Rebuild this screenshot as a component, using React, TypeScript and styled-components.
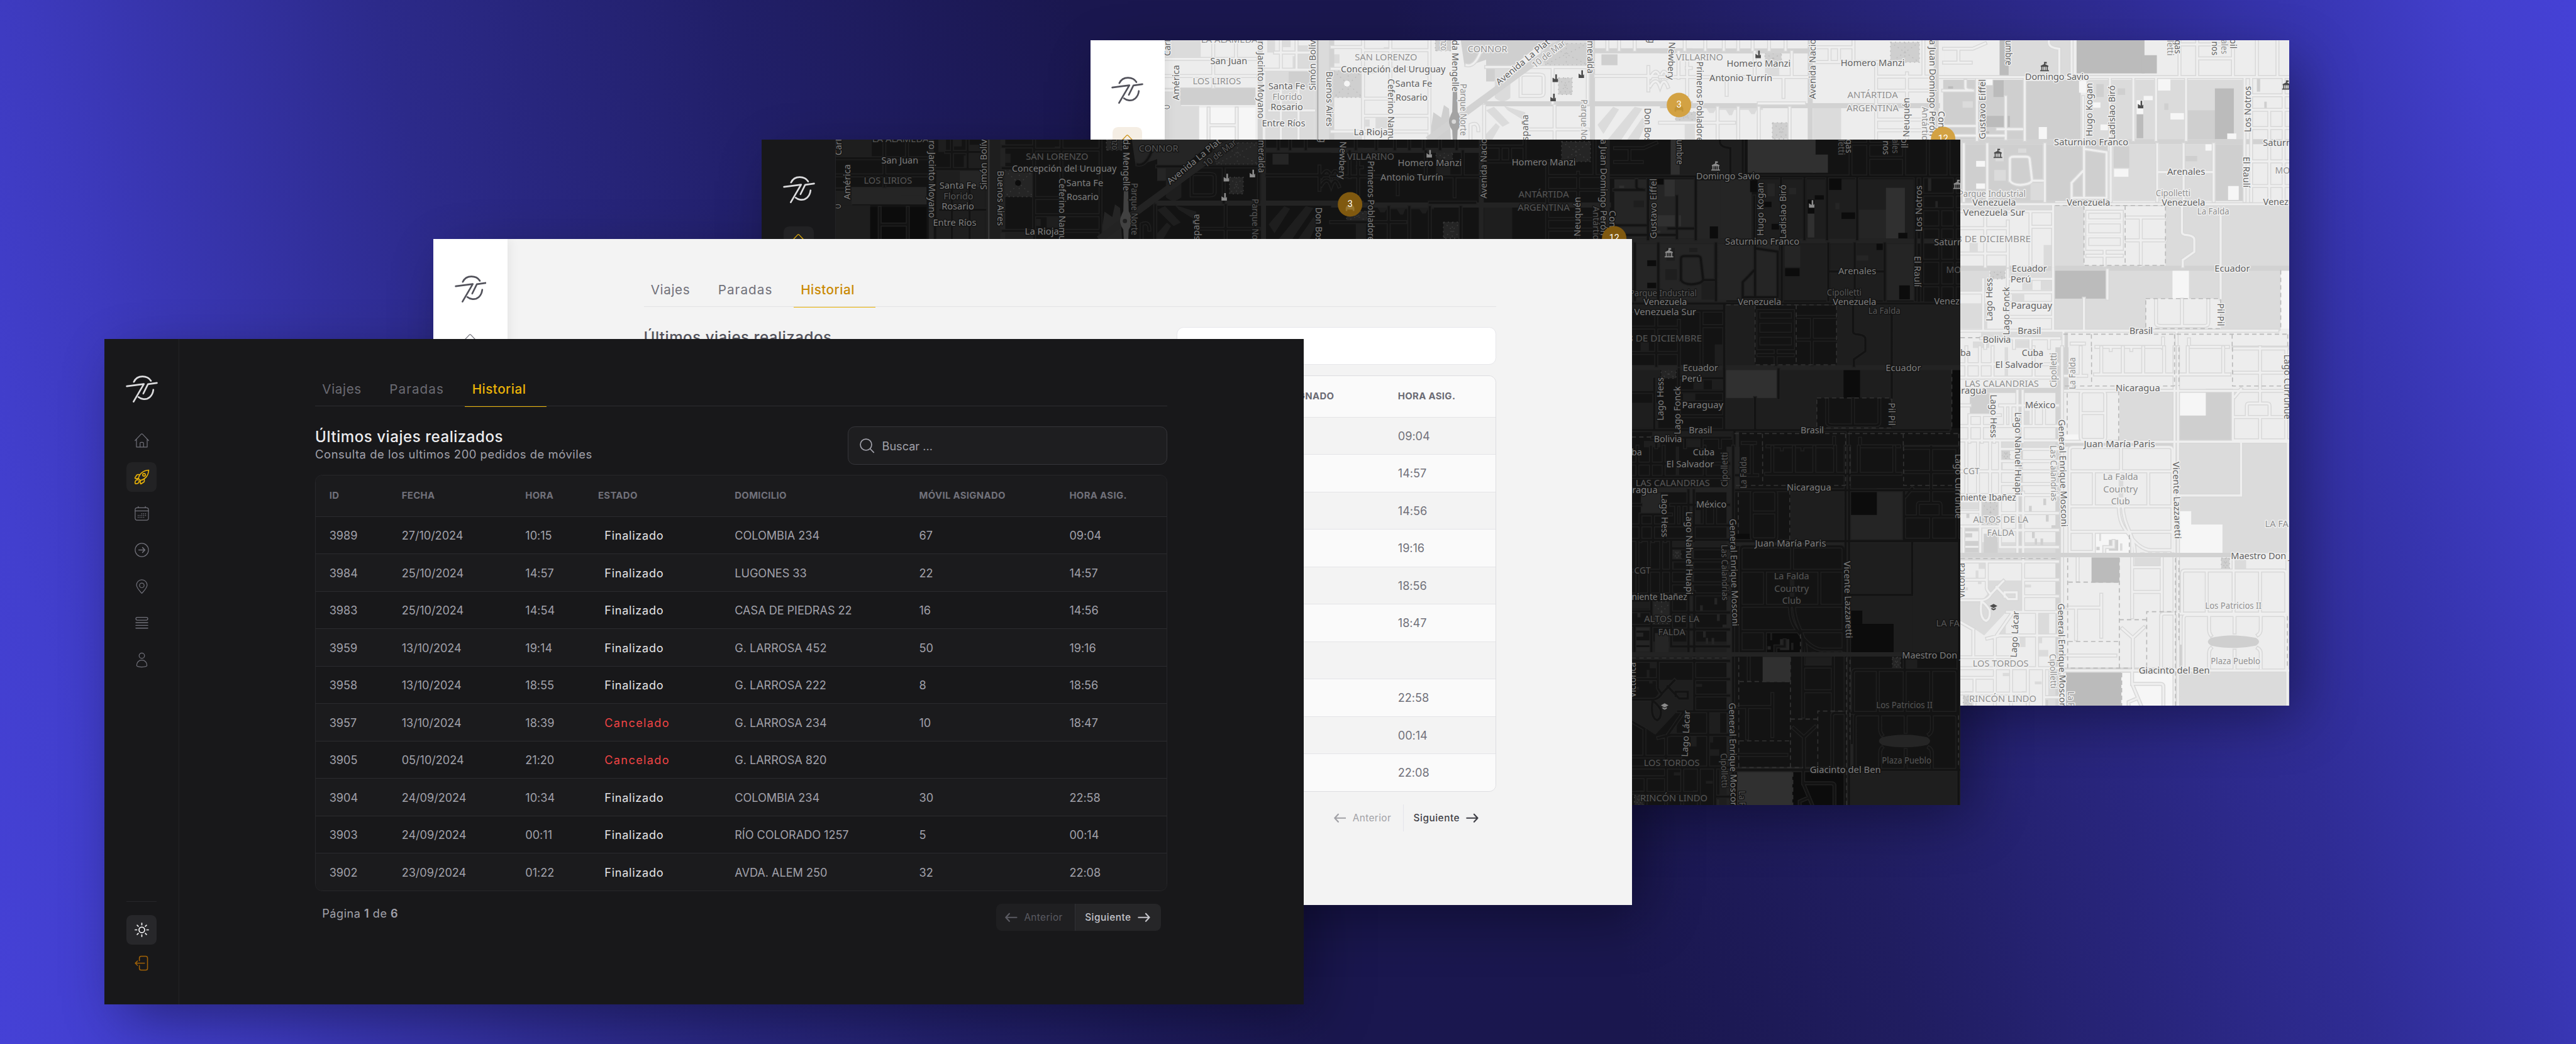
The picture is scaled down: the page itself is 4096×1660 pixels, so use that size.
import React from 'react';
import styled, { createGlobalStyle, ThemeProvider, css } from 'styled-components';

/* 1rem is ten design units; the board is 474.9rem wide. */
const GlobalStyle = createGlobalStyle`
  html { font-size: 8.625px; }
  body { margin: 0; background: #1a174d; overflow: hidden; }
  *, *::before, *::after { box-sizing: border-box; }
`;

const dark = {
  name: 'dark',
  page: '#18181a', side: '#18181a', sideBorder: '#232326', sideShadow: 'none',
  logo: '#dcdcde', icon: '#71717a', activeIcon: '#eab308', activeBox: '#222224',
  sunBox: '#27272a', sun: '#f4f4f5', exit: '#a16207', rule: '#27272a',
  tab: '#6b6b73', tabActive: '#eab308', tabLine: '#2e2e31', tabBar: '#eab308',
  title: '#ececee', sub: '#a1a1aa',
  search: '#1e1e20', searchBorder: '#36363a', searchText: '#a1a1aa',
  border: '#27272a', line: '#2b2b2e', head: '#1b1b1d', headText: '#71717a', even: '#1b1b1d', odd: '#18181a',
  cell: '#a1a1aa', status: '#e4e4e7', cancel: '#ef4444',
  prev: '#1f1f21', next: '#262628', prevText: '#5b5b62', nextText: '#c4c4ca', split: '#313135',
  map: {
    base: '#131313', a: '#1e1e1e', b: '#252525', c: '#303030', w: '#0c0c0c', dots: '#3a3a3a',
    casing: '#202020', inner: '#131313', major: '#232323', dash: '#333333', strong: '#414141',
    text: '#7d7d7d', minor: '#565656', halo: '#151515', poi: '#8b8b8b', pin: '#80590f', pinCar: '#a88a45',
  },
};

const light: typeof dark = {
  name: 'light',
  page: '#f3f3f3', side: '#ffffff', sideBorder: '#ffffff', sideShadow: '0.2rem 0 2rem rgba(0,0,0,.07)',
  logo: '#52525b', icon: '#71717a', activeIcon: '#ca8a04', activeBox: '#f5eee4',
  sunBox: '#f4f4f5', sun: '#52525b', exit: '#ca8a04', rule: '#e4e4e7',
  tab: '#71717a', tabActive: '#ca8a04', tabLine: '#e2e2e4', tabBar: '#eab308',
  title: '#52525b', sub: '#71717a',
  search: '#ffffff', searchBorder: '#e6e6ea', searchText: '#71717a',
  border: '#dddde0', line: '#e4e4e7', head: '#fafafa', headText: '#6b6b74', even: '#fafafa', odd: '#f3f3f3',
  cell: '#71717a', status: '#3f3f46', cancel: '#ef4444',
  prev: 'transparent', next: 'transparent', prevText: '#a1a1a6', nextText: '#3f3f46', split: '#e4e4ea',
  map: {
    base: '#ededed', a: '#dbdbdb', b: '#cfcfcf', c: '#bbbbbb', w: '#f6f6f6', dots: '#bdbdbd',
    casing: '#d8d8d8', inner: '#efefef', major: '#d2d2d2', dash: '#b9b9b9', strong: '#a3a3a3',
    text: '#626262', minor: '#919191', halo: '#f0f0f0', poi: '#4c4c4c', pin: '#d3a243', pinCar: '#b98a2c',
  },
};

type Theme = typeof dark;

/* ---------- Board and windows ---------- */

const Board = styled.main`
  position: relative;
  width: 474.9rem;
  height: 192.5rem;
  overflow: hidden;
  font-family: Inter, "Liberation Sans", sans-serif;
  background: linear-gradient(76deg, #4541d6 0%, #423fce 5%, #3d3abe 10%, #2c2a8a 22.5%, #211f68 35%, #1a174f 47%, #1a174e 58%, #201d60 67.5%, #2f2c94 83.7%, #3735b0 90%, #423fcc 96%, #4541d6 100%);
`;

const Window = styled.section<{ $step: number }>`
  position: absolute;
  isolation: isolate;
  left: ${p => 19.3 + p.$step * 60.57}rem;
  top: ${p => 62.45 - p.$step * 18.35}rem;
  width: 221rem;
  height: 122.7rem;
  display: flex;
  overflow: hidden;
  background: ${p => (p.theme as Theme).page};
`;

const WindowShadow = styled.div<{ $step: number }>`
  position: absolute;
  left: ${p => 19.3 + p.$step * 60.57}rem;
  top: ${p => 62.45 - p.$step * 18.35}rem;
  width: 221rem;
  height: 122.7rem;
  box-shadow: 2.5rem 3rem 10rem -1rem rgba(0, 0, 10, 0.42);
`;

/* ---------- Sidebar ---------- */

const Side = styled.aside`
  position: relative;
  z-index: 1;
  flex: none;
  width: 13.7rem;
  padding: 6.6rem 0 4.8rem;
  display: flex;
  flex-direction: column;
  align-items: center;
  background: ${p => (p.theme as Theme).side};
  border-right: 0.2rem solid ${p => (p.theme as Theme).sideBorder};
  box-shadow: ${p => (p.theme as Theme).sideShadow};
`;

const LogoMark = styled.svg`
  width: 6rem;
  height: 5.2rem;
  flex: none;
  fill: none;
  stroke: ${p => (p.theme as Theme).logo};
  stroke-width: 3.1;
  stroke-linecap: round;
  stroke-linejoin: round;
`;

const Nav = styled.nav`
  margin-top: 4.2rem;
  display: flex;
  flex-direction: column;
  gap: 1.24rem;
`;

const NavItem = styled.a<{ $active?: boolean; $tone?: 'sun' | 'exit' }>`
  width: 5.5rem;
  height: 5.5rem;
  border-radius: 1rem;
  display: grid;
  place-items: center;
  color: ${p => {
    const t = p.theme as Theme;
    if (p.$tone === 'sun') return t.sun;
    if (p.$tone === 'exit') return t.exit;
    return p.$active ? t.activeIcon : t.icon;
  }};
  ${p => p.$active && css`background: ${(p.theme as Theme).activeBox};`}
  ${p => p.$tone === 'sun' && css`background: ${(p.theme as Theme).sunBox};`}
`;

const Glyph = styled.svg<{ $weight?: number }>`
  width: 2.9rem;
  height: 2.9rem;
  overflow: visible;
  fill: none;
  stroke: currentColor;
  stroke-width: ${p => p.$weight ?? 1.4};
  stroke-linecap: round;
  stroke-linejoin: round;
`;

const SideFoot = styled.div`
  margin-top: auto;
  width: 5.5rem;
  padding-top: 2.4rem;
  border-top: 0.2rem solid ${p => (p.theme as Theme).rule};
  display: flex;
  flex-direction: column;
  gap: 0.65rem;
`;

const HomeIcon = () => (
  <Glyph viewBox="0 0 29 29">
    <path d="M2 14.5 13.2 2.7a1.8 1.8 0 0 1 2.6 0L27 14.5M4.6 12v14.5h19.8V12M11.3 26.5v-7a1.6 1.6 0 0 1 1.6-1.6h3.2a1.6 1.6 0 0 1 1.6 1.6v7" />
  </Glyph>
);
const RocketIcon = () => (
  <Glyph viewBox="0 0 29 29" $weight={1.9}>
    <path d="M8.2 17.2C9.6 9.5 16 2.4 27.2 1.8 26.6 13 19.5 19.4 11.8 20.8Z" />
    <circle cx="18.6" cy="10.4" r="2.5" />
    <path d="M11 10.2 7.6 9.8c-1 0-1.8.3-2.4 1L2 15.8c-.3.6 0 1 .6 1.1l5.4.6M18.8 18l.4 3.4c0 1-.3 1.8-1 2.4L13.2 27c-.6.3-1 0-1.100-.6l-.6-5.4" />
    <path d="M7.3 19.8c-2.6-1-5 1-5.300 5.200-.1 1.200.8 2 2 1.900 4.200-.3 6.200-2.700 5.200-5.300" />
  </Glyph>
);
const CalendarIcon = () => (
  <Glyph viewBox="0 0 29 29">
    <rect x="2.2" y="4" width="24.6" height="22.8" rx="3.6" />
    <path d="M8 1.5V4M21 1.5V4M2.2 9.8h24.6" />
    <g strokeWidth="1.9">
      <path d="M14.5 15v.1M18 15v.1M21.5 15v.1M7.8 18.2v.1M11.2 18.2v.1M14.5 18.2v.1M18 18.2v.1M21.5 18.2v.1M7.8 21.5v.1M11.2 21.5v.1M14.5 21.5v.1M18 21.5v.1" />
    </g>
  </Glyph>
);
const ArrowCircleIcon = () => (
  <Glyph viewBox="0 0 29 29">
    <circle cx="14.5" cy="14.5" r="12.3" />
    <path d="M8.8 14.5h11M15.8 10l4.4 4.5-4.4 4.5" strokeWidth="1.7" />
  </Glyph>
);
const PinIcon = () => (
  <Glyph viewBox="0 0 29 29">
    <path d="M24.3 12c0 5-4.8 9.6-9.8 15.2C9.5 21.6 4.7 17 4.700 12a9.800 9.800 0 0 1 19.600 0Z" />
    <circle cx="14.5" cy="12.5" r="4.3" />
  </Glyph>
);
const ListIcon = () => (
  <Glyph viewBox="0 0 29 29">
    <rect x="3.5" y="4.2" width="22" height="5.2" rx="2.6" />
    <path d="M3.5 14h22M3.5 19h22M3.5 24h22" strokeWidth="1.7" />
  </Glyph>
);
const UserIcon = () => (
  <Glyph viewBox="0 0 29 29">
    <circle cx="14.5" cy="6.5" r="5" />
    <path d="M5 24.500c0-6 4-9.800 9.500-9.800s9.500 3.800 9.500 9.800c0 1.800-4 2.800-9.500 2.800S5 26.300 5 24.500Z" />
  </Glyph>
);
const SunIcon = () => (
  <Glyph viewBox="0 0 29 29" $weight={2}>
    <circle cx="14.5" cy="14.5" r="5.2" />
    <path d="M14.5 2.3v3M14.5 23.7v3M2.3 14.5h3M23.7 14.5h3M5.9 5.9 8 8M21 21l2.100 2.100M5.900 23.100 8 21M21 8l2.100-2.100" />
  </Glyph>
);
const ExitIcon = () => (
  <Glyph viewBox="0 0 29 29" $weight={1.8}>
    <path d="M10 10V5a3.200 3.200 0 0 1 3.200-3.200h8.600A3.200 3.200 0 0 1 25 5v19a3.200 3.200 0 0 1-3.200 3.200h-8.600A3.200 3.200 0 0 1 10 24v-5M19.500 14.500H3M6.500 10.500l-4 4 4 4" />
  </Glyph>
);

const NAV = [HomeIcon, RocketIcon, CalendarIcon, ArrowCircleIcon, PinIcon, ListIcon, UserIcon];

function Sidebar({ active }: { active: number }) {
  return (
    <Side>
      <LogoMark viewBox="38 66 60 52">
        <path d="M54 79C57 72.500 63 69 70 69s12.500 3 15.500 8" />
        <path d="M41 87 72.500 83 53.500 115.500" />
        <path d="M96.500 81 80 83.200 71.500 100.500" />
        <path d="M90 93.500C88.500 106 80 111.500 72 110.800c-3.500-.3-7-1.600-9.500-3.800" />
      </LogoMark>
      <Nav>
        {NAV.map((Icon, i) => (
          <NavItem key={i} $active={i === active}><Icon /></NavItem>
        ))}
      </Nav>
      <SideFoot>
        <NavItem $tone="sun"><SunIcon /></NavItem>
        <NavItem $tone="exit"><ExitIcon /></NavItem>
      </SideFoot>
    </Side>
  );
}

/* ---------- History page ---------- */

const Page = styled.div`
  width: 157.1rem;
  margin-left: 25.1rem;
  display: flex;
  flex-direction: column;
`;

const Tabs = styled.div`
  height: 12.5rem;
  padding-left: 1.3rem;
  display: flex;
  align-items: flex-end;
  border-bottom: 0.2rem solid ${p => (p.theme as Theme).tabLine};
`;

const Tab = styled.a<{ $active?: boolean; $width: number; $track: number }>`
  width: ${p => p.$width}rem;
  height: 5.1rem;
  margin-bottom: -0.2rem;
  padding-left: ${p => (p.$active ? 1.35 : 0)}rem;
  font-size: 2.4rem;
  line-height: 3.8rem;
  letter-spacing: ${p => p.$track}em;
  white-space: nowrap;
  font-weight: ${p => (p.$active ? 500 : 400)};
  color: ${p => (p.$active ? (p.theme as Theme).tabActive : (p.theme as Theme).tab)};
  border-bottom: 0.2rem solid ${p => (p.$active ? (p.theme as Theme).tabBar : 'transparent')};
`;

const Heading = styled.header`
  height: 12.6rem;
  padding-top: 3.7rem;
  display: flex;
  justify-content: space-between;
`;

const Title = styled.h1`
  margin: 0.2rem 0 0;
  font-size: 2.8rem;
  line-height: 3.4rem;
  font-weight: 500;
  letter-spacing: 0.021em;
  color: ${p => (p.theme as Theme).title};
`;

const Subtitle = styled.p`
  margin: 0.1rem 0 0;
  font-size: 2.14rem;
  line-height: 2.9rem;
  letter-spacing: 0.028em;
  color: ${p => (p.theme as Theme).sub};
`;

const Search = styled.div`
  width: 58.9rem;
  height: 7rem;
  padding: 0 2rem;
  display: flex;
  align-items: center;
  gap: 1.3rem;
  font-size: 2.1rem;
  color: ${p => (p.theme as Theme).searchText};
  background: ${p => (p.theme as Theme).search};
  border: 0.2rem solid ${p => (p.theme as Theme).searchBorder};
  border-radius: 1.3rem;
`;

const Grid = styled.div`
  border: 0.2rem solid ${p => (p.theme as Theme).border};
  border-radius: 1.3rem;
  overflow: hidden;
`;

const columns = css`
  display: grid;
  grid-template-columns: 13.34rem 22.8rem 13.4rem 25.2rem 34rem 27.7rem 1fr;
  align-items: center;
  padding-left: 2.5rem;
`;

const HeadRow = styled.div`
  ${columns}
  height: 7.5rem;
  padding-bottom: 0.1rem;
  font-size: 1.73rem;
  font-weight: 700;
  letter-spacing: 0.022em;
  color: ${p => (p.theme as Theme).headText};
  background: ${p => (p.theme as Theme).head};
`;

const Row = styled.div`
  ${columns}
  height: 6.9rem;
  font-size: 2.1rem;
  letter-spacing: -0.002em;
  color: ${p => (p.theme as Theme).cell};
  background: ${p => (p.theme as Theme).odd};
  border-top: 0.2rem solid ${p => (p.theme as Theme).line};
  &:nth-child(odd) { background: ${p => (p.theme as Theme).even}; }
`;

const Status = styled.span<{ $cancelled: boolean }>`
  padding-left: 1.2rem;
  letter-spacing: 0.04em;
  color: ${p => (p.$cancelled ? (p.theme as Theme).cancel : (p.theme as Theme).status)};
  ${p => p.$cancelled && css`letter-spacing: 0.075em;`}
`;

const Footer = styled.footer`
  padding: 2.4rem 1.2rem 0 1.3rem;
  display: flex;
  justify-content: space-between;
  color: ${p => (p.theme as Theme).cell};
`;

const PageCount = styled.span`
  padding-top: 0.3rem;
  font-size: 2.1rem;
  line-height: 2.8rem;
  letter-spacing: 0.028em;
  b { font-weight: 600; }
`;

const Pager = styled.div`
  width: 30.4rem;
  height: 4.95rem;
  display: flex;
  border-radius: 1rem;
  overflow: hidden;
`;

const PagerButton = styled.a<{ $next?: boolean }>`
  flex: none;
  width: ${p => (p.$next ? 15.9 : 14.5)}rem;
  display: flex;
  align-items: center;
  gap: 1.2rem;
  padding-left: 1.7rem;
  font-size: 1.78rem;
  letter-spacing: 0.025em;
  color: ${p => (p.$next ? (p.theme as Theme).nextText : (p.theme as Theme).prevText)};
  background: ${p => (p.$next ? (p.theme as Theme).next : (p.theme as Theme).prev)};
  ${p => p.$next && css`
    padding-left: 1.8rem;
    font-weight: 500;
    letter-spacing: 0.035em;
    border-left: 0.2rem solid ${(p.theme as Theme).split};
  `}
`;

const Arrow = styled.svg`
  width: 2.3rem;
  height: 1.8rem;
  flex: none;
  fill: none;
  stroke: currentColor;
  stroke-width: 2.5;
  stroke-linecap: round;
  stroke-linejoin: round;
`;

const HEAD = ['ID', 'FECHA', 'HORA', 'ESTADO', 'DOMICILIO', 'MÓVIL ASIGNADO', 'HORA ASIG.'];
const TRIPS = [
  ['3989', '27/10/2024', '10:15', 'Finalizado', 'COLOMBIA 234', '67', '09:04'],
  ['3984', '25/10/2024', '14:57', 'Finalizado', 'LUGONES 33', '22', '14:57'],
  ['3983', '25/10/2024', '14:54', 'Finalizado', 'CASA DE PIEDRAS 22', '16', '14:56'],
  ['3959', '13/10/2024', '19:14', 'Finalizado', 'G. LARROSA 452', '50', '19:16'],
  ['3958', '13/10/2024', '18:55', 'Finalizado', 'G. LARROSA 222', '8', '18:56'],
  ['3957', '13/10/2024', '18:39', 'Cancelado', 'G. LARROSA 234', '10', '18:47'],
  ['3905', '05/10/2024', '21:20', 'Cancelado', 'G. LARROSA 820', '', ''],
  ['3904', '24/09/2024', '10:34', 'Finalizado', 'COLOMBIA 234', '30', '22:58'],
  ['3903', '24/09/2024', '00:11', 'Finalizado', 'RÍO COLORADO 1257', '5', '00:14'],
  ['3902', '23/09/2024', '01:22', 'Finalizado', 'AVDA. ALEM 250', '32', '22:08'],
];

function History({ placeholder }: { placeholder: boolean }) {
  return (
    <Page>
      <Tabs>
        <Tab $width={12.4} $track={0.03}>Viajes</Tab>
        <Tab $width={13.9} $track={0.05}>Paradas</Tab>
        <Tab $width={15.1} $track={0.022} $active>Historial</Tab>
      </Tabs>
      <Heading>
        <div>
          <Title>Últimos viajes realizados</Title>
          <Subtitle>Consulta de los ultimos 200 pedidos de móviles</Subtitle>
        </div>
        <Search>
          {placeholder && (
            <>
              <Glyph viewBox="0 0 29 29" $weight={2}>
                <circle cx="12.8" cy="12.8" r="10.4" />
                <path d="m20.3 20.3 6.7 6.7" />
              </Glyph>
              <span>Buscar ...</span>
            </>
          )}
        </Search>
      </Heading>
      <Grid>
        <HeadRow>{HEAD.map(h => <span key={h}>{h}</span>)}</HeadRow>
        {TRIPS.map(trip => (
          <Row key={trip[0]}>
            {trip.map((value, i) =>
              i === 3
                ? <Status key={i} $cancelled={value === 'Cancelado'}>{value}</Status>
                : <span key={i}>{value}</span>,
            )}
          </Row>
        ))}
      </Grid>
      <Footer>
        <PageCount>Página <b>1</b> de <b>6</b></PageCount>
        <Pager>
          <PagerButton>
            <Arrow viewBox="0 0 23 18"><path d="M21.5 9h-20M8 2 1.5 9 8 16" /></Arrow>
            Anterior
          </PagerButton>
          <PagerButton $next>
            Siguiente
            <Arrow viewBox="0 0 23 18"><path d="M1.5 9h20M15 2l6.5 7-6.500 7" /></Arrow>
          </PagerButton>
        </Pager>
      </Footer>
    </Page>
  );
}

/* ---------- Map ---------- */

const MapCanvas = styled.svg`
  flex: 1;
  min-width: 0;
  height: 122.7rem;
  display: block;
  background: ${p => (p.theme as Theme).map.base};
  .n { vector-effect: non-scaling-stroke; fill: none; }
  .casing { stroke: ${p => (p.theme as Theme).map.casing}; stroke-width: 6.2; stroke-linecap: square; }
  .inner { stroke: ${p => (p.theme as Theme).map.inner}; stroke-width: 3.2; stroke-linecap: square; }
  .major { stroke: ${p => (p.theme as Theme).map.major}; stroke-width: 8; }
  .dash { stroke: ${p => (p.theme as Theme).map.dash}; stroke-width: 1.6; stroke-dasharray: 7 5; }
  .dots { stroke: ${p => (p.theme as Theme).map.dots}; stroke-width: 1.5; stroke-dasharray: 2 5; }
  text {
    font-family: "Noto Sans", sans-serif;
    text-anchor: middle;
    paint-order: stroke;
    stroke-width: 3.5;
    stroke-linejoin: round;
    stroke: ${p => (p.theme as Theme).map.halo};
  }
`;

/* [x1, y1, x2, y2, shade] */
type Area = [number, number, number, number, 'a' | 'b' | 'c' | 'w' | 'base'];
interface Tile {
  transform: string;
  areas: Area[];
  shapes?: [string, 'a' | 'b' | 'c'][];
  dotted?: [number, number, number, number][];
  majors: string;
  streets: string;
  dashes?: string;
}

const north: Tile = {
  transform: 'translate(-20 -14) scale(.7207 .33333)',
  areas: [
    [218, 42, 310, 135, 'a'], [218, 305, 260, 594, 'a'], [258, 304, 450, 400, 'b'], [384, 350, 450, 400, 'b'],
    [218, 405, 306, 594, 'a'], [306, 415, 450, 594, 'w'], [475, 206, 600, 594, 'a'], [535, 208, 590, 305, 'b'],
    [480, 42, 500, 110, 'a'], [512, 42, 540, 80, 'a'], [545, 130, 560, 195, 'a'], [558, 70, 600, 200, 'a'],
    [600, 42, 645, 594, 'a'], [648, 545, 725, 594, 'a'], [730, 200, 760, 225, 'a'], [640, 120, 665, 170, 'a'], [778, 80, 795, 104, 'a'],
    [730, 480, 742, 520, 'a'], [757, 470, 795, 530, 'a'], [1335, 120, 1376, 180, 'b'], [1180, 42, 1310, 180, 'a'],
  ],
  shapes: [
    ['M975 42H1190L1060 270H1040V150L985 190Z', 'b'],
    ['M1062 200H1102V360Q1082 400 1062 360Z', 'a'],
    ['M1040 430 1060 410 1100 500 1082 520ZM1085 405 1140 440V490L1095 430ZM1040 560 1065 500 1075 520 1055 594H1038Z', 'a'],
    ['M1325 510 1365 410 1380 425 1340 560ZM1350 594 1420 410 1440 420 1385 594ZM1400 594 1440 470 1450 500 1430 594Z', 'a'],
    ['M895 594 905 440 925 470 932 400 945 420 950 594Z', 'b'],
  ],
  dotted: [[650, 212, 724, 358], [910, 42, 950, 100], [1225, 250, 1260, 342], [1190, 60, 1300, 178]],
  majors: 'M462 42V594M1312 42V594M1035 393H1568M1315 100H1568M645 42V594',
  streets:
    'M218 145H450M218 240H450M218 320H250M342 145V300M342 42V135M400 42V140M475 205H600M515 42V205M555 42V205M500 110H600' +
    'M725 42V594M795 42V594M895 42V594M725 97H890M645 200H900M725 365H890M725 460H890M645 547H890M645 80H725' +
    'M330 420V594M402 420V594M330 512H402M515 320V594M560 305V594M485 430H600' +
    'M1040 190H1300V390M1210 190V390M1128 350V245Q1128 232 1140 232H1175Q1187 232 1187 245V335Q1187 350 1175 350H1128' +
    'M1035 405V594M1215 405V594M1140 535H1300M1290 400V594M990 180Q1010 190 1025 110M1320 240H1480M1455 190V320M1380 42V95M1420 42V95M1350 42V95' +
    'M1000 594V510Q1020 490 1020 540M1460 250Q1475 180 1485 250Q1495 180 1505 250M1460 295Q1475 240 1485 300Q1495 240 1505 300',
};

const northEast: Tile = {
  transform: 'translate(1050 -14) scale(.7589 .3954)',
  areas: [
    [372, 348, 440, 500, 'a'], [255, 150, 290, 200, 'a'], [60, 400, 85, 500, 'a'],
    [690, 42, 825, 200, 'base'], [847, 35, 1000, 200, 'a'], [825, 35, 847, 200, 'c'], [1012, 35, 1177, 190, 'c'], [1170, 105, 1207, 190, 'c'],
    [688, 220, 885, 497, 'b'], [888, 225, 945, 500, 'b'], [945, 220, 1022, 497, 'b'], [1035, 220, 1090, 497, 'a'], [1098, 220, 1145, 497, 'a'],
    [1155, 220, 1200, 497, 'a'], [1208, 220, 1275, 497, 'a'], [1280, 220, 1415, 497, 'a'], [1282, 362, 1350, 497, 'b'], [1348, 260, 1394, 497, 'c'],
    [790, 388, 850, 440, 'c'], [810, 222, 835, 300, 'c'], [1158, 380, 1174, 492, 'c'],
    [790, 215, 808, 245, 'w'], [1018, 225, 1036, 280, 'w'], [1208, 215, 1240, 270, 'w'], [1240, 375, 1273, 405, 'w'], [1175, 295, 1197, 315, 'w'],
    [1158, 315, 1174, 380, 'w'], [920, 440, 940, 497, 'w'], [1052, 325, 1070, 350, 'w'], [1070, 428, 1090, 455, 'w'], [1378, 470, 1400, 497, 'w'],
    [730, 520, 792, 785, 'b'], [798, 520, 930, 785, 'b'], [900, 700, 930, 785, 'a'], [938, 520, 1088, 785, 'b'], [1100, 520, 1205, 785, 'a'], [1102, 530, 1140, 630, 'b'],
    [1213, 520, 1270, 785, 'a'], [1275, 520, 1342, 785, 'a'], [1350, 520, 1420, 785, 'b'], [1275, 575, 1305, 600, 'b'],
    [768, 598, 790, 625, 'w'], [768, 703, 790, 728, 'w'], [1103, 635, 1138, 672, 'w'], [1325, 518, 1342, 550, 'w'], [1380, 715, 1406, 780, 'w'],
    [730, 785, 960, 828, 'a'], [958, 805, 1030, 1090, 'a'], [1228, 805, 1530, 1090, 'a'], [932, 990, 955, 1085, 'a'],
    [730, 1105, 800, 1212, 'a'], [958, 1107, 1365, 1385, 'a'], [958, 1107, 1087, 1240, 'c'], [1245, 1105, 1285, 1240, 'w'],
    [1180, 1240, 1362, 1380, 'base'], [1365, 1105, 1508, 1390, 'a'], [1508, 1105, 1530, 1380, 'w'], [730, 1262, 795, 1380, 'a'],
    [850, 1105, 955, 1140, 'a'], [880, 1155, 905, 1200, 'a'], [925, 1155, 952, 1200, 'a'], [855, 1220, 885, 1255, 'a'], [780, 1395, 975, 1425, 'a'],
    [760, 1440, 800, 1470, 'a'], [865, 1435, 905, 1470, 'a'], [752, 980, 772, 1020, 'a'], [1450, 215, 1458, 275, 'b'], [1468, 322, 1474, 355, 'b'],
    [780, 460, 800, 490, 'c'], [700, 250, 712, 270, 'c'], [735, 320, 760, 350, 'a'], [1225, 330, 1235, 360, 'b'], [1112, 260, 1130, 290, 'b'], [1060, 240, 1078, 300, 'b'],
    [815, 540, 835, 600, 'a'], [812, 640, 840, 690, 'a'], [870, 540, 890, 560, 'a'],
  ],
  shapes: [['M110 345H250V360H235L230 380H222L215 360H180L175 385H168L160 360H135L130 375H120Z', 'a']],
  dotted: [[560, 45, 630, 138], [273, 420, 316, 495], [255, 95, 295, 150], [38, 370, 88, 415], [802, 1105, 838, 1148]],
  majors:
    'M365 35V500M671 35V500M0 340H680M0 85H360M680 508H1530M730 1098H1530M730 793H960M985 1390V1470M680 508V780',
  streets:
    'M0 207H360M0 420H180M45 90V210M97 130V500M140 350V500M190 350V500M240 350V500M315 350V500M110 35V80M155 35V80M190 35V80M225 35V80M265 35V80M305 35V80M60 35V80' +
    'M66 130V290M162 210V290M300 210V300M240 330H350M65 165H75M230 90V205M320 90V205M380 68H470M412 68V135M435 68V135M470 40V135M380 137H560M525 140V500M600 190V500' +
    'M525 205H665M525 270H665M525 405H665M525 455H665M690 75H760L790 50M690 140H755M640 35V200M725 75V140' +
    'M680 207H1530M688 270H760M770 220V500M840 300V495M690 435H765M886 210V500M1028 300V500M1093 210V500M1150 210V500M1205 210V500M1278 210V500M1420 210V785M690 480H840M742 225V255Q742 268 755 268' +
    'M820 450H880M945 35Q940 70 970 75V200M1000 35V200M1262 35V200M1305 35V200M1392 35V200M1450 35V200M1500 35V200M1262 55H1390M1305 120H1390' +
    'M1436 210V785M1480 360V500M1515 210V780M1440 292H1530M1440 360H1530M1440 445H1530M1440 600H1530M1440 715H1530M1480 520V780' +
    'M738 520V785M795 520V785M935 520V785M1030 520V640M1095 520V785M1208 520V785M1272 520V785M1345 520V785M1208 650H1345M850 690V590Q850 578 860 578H888Q898 578 898 590L904 690M850 690Q855 710 875 710Q900 708 904 690H930' +
    'M1030 542 1085 558V770H1000V700L1030 640V770M730 800H1530M730 833H955M955 800V1090M790 833V1090M845 880V1090M900 833V1090M730 912H840M900 905H955M730 1030H845M842 970H900' +
    'M1038 835H1122V875H1038ZM1038 885H1122V940H1038ZM1038 950H1122V1000H1038ZM1038 1008H1122M1080 1008V1085M1038 1040H1122M1134 862H1228M1168 862V1085M1134 968H1228' +
    'M1268 805V930Q1268 944 1282 944Q1298 948 1298 965V1022L1270 1060V1090M1362 850V1240M955 1100V1390M1205 1245V1355Q1205 1368 1220 1368H1320Q1332 1368 1332 1355V1245M1268 1245V1368' +
    'M845 1105V1390M845 1148H955M845 1210H955M845 1260H955M845 1325H955M785 1150V1390M730 1212H785M730 1390H1500M1030 1240V1385M1087 1107V1240' +
    'M980 1390V1470M1000 1450H1030M1060 1465H1220M1095 1465V1480M1145 1465V1480M1222 1425V1470M1255 1390V1470M1285 1430V1465H1380M1395 1468H1525M780 1425H970M860 1430V1470M900 1430V1470M945 1430V1470M790 1435V1470',
  dashes:
    'M960 806H1230M1030 806V1085H1228V806M1130 806V1085M1180 1240H1362V1380H1180ZM1508 1107V1380M980 1406H1525M1048 1406V1470M1250 1406V1470M1390 1406V1470M1525 1406V1470M730 1422H780',
};

const southEast: Tile = {
  transform: 'translate(1570 566) scale(.4273 .4464)',
  areas: [
    [120, 190, 205, 278, 'b'], [250, 392, 500, 414, 'a'], [250, 414, 262, 510, 'a'], [168, 640, 250, 730, 'b'], [80, 640, 160, 670, 'a'], [165, 805, 500, 852, 'a'],
    [80, 862, 500, 882, 'a'], [345, 262, 378, 322, 'a'], [270, 0, 285, 130, 'a'],
    [375, 655, 387, 682, 'b'], [437, 625, 449, 652, 'b'], [448, 693, 460, 720, 'b'], [388, 762, 400, 788, 'b'], [400, 790, 410, 815, 'b'], [425, 790, 436, 817, 'b'],
    [472, 735, 497, 747, 'b'], [100, 745, 157, 760, 'b'], [98, 768, 130, 785, 'b'], [98, 800, 158, 820, 'b'], [98, 828, 158, 848, 'b'], [180, 770, 240, 850, 'b'], [105, 682, 118, 705, 'b'],
    [765, 172, 1003, 392, 'a'], [1022, 172, 1255, 384, 'b'], [1022, 172, 1138, 282, 'w'],
    [1022, 390, 1487, 850, 'a'], [1290, 390, 1487, 850, 'a'], [1022, 677, 1075, 735, 'w'], [1022, 732, 1210, 850, 'w'], [530, 360, 590, 390, 'w'],
    [660, 768, 810, 850, 'w'], [720, 795, 760, 840, 'b'], [678, 768, 686, 800, 'a'], [666, 824, 680, 838, 'b'], [768, 810, 778, 840, 'a'], [762, 545, 782, 620, 'a'],
    [645, 868, 765, 972, 'c'], [830, 868, 945, 905, 'a'], [535, 1338, 773, 1485, 'c'], [775, 1340, 1010, 1485, 'w'], [1020, 1335, 1487, 1485, 'a'],
    [1018, 1228, 1038, 1325, 'b'], [1205, 870, 1240, 915, 'a'], [1265, 878, 1312, 915, 'a'],
    [415, 1100, 462, 1185, 'a'], [158, 890, 185, 915, 'a'], [145, 922, 157, 955, 'a'], [358, 980, 384, 992, 'a'], [155, 965, 170, 978, 'a'], [92, 992, 112, 1004, 'a'],
    [335, 1195, 360, 1238, 'a'], [418, 1198, 432, 1222, 'a'], [418, 1250, 458, 1277, 'a'], [262, 1345, 292, 1358, 'a'], [400, 1380, 430, 1392, 'a'], [458, 1335, 500, 1485, 'a'],
    [98, 1420, 130, 1432, 'a'], [345, 1420, 375, 1430, 'a'], [443, 1455, 458, 1480, 'b'], [468, 1385, 496, 1397, 'b'],
  ],
  shapes: [
    ['M80 1050H170L195 1020V963H348V1090H280L182 1190 80 1125Z', 'a'],
    ['M240 1185 275 1120V1185Z', 'a'],
    ['M1160 1200Q1257 1180 1355 1200Q1380 1216 1355 1232Q1257 1252 1160 1232Q1134 1216 1160 1200Z', 'b'],
  ],
  dotted: [[168, 640, 250, 730], [258, 420, 293, 465], [1205, 870, 1240, 915], [92, 1440, 130, 1482]],
  majors: 'M80 178H500M500 0V1485M535 0V180M338 180V850M505 400H1010M522 1333H1010',
  streets:
    'M80 70H250M80 125H500M105 0V125M163 0V125M218 0V125M395 0V125M290 70H500M80 240H120M120 280H250M118 280V390M172 280V390M225 280V390M80 325H500M80 385H500M250 240H500M272 240V325M295 240V325M395 240V325M440 240V325M348 180V390' +
    'M105 390V620M155 390V620M207 390V620M250 390V825M255 420H500M255 470H500M80 512H500M255 565H500M80 610H500M250 685H500M250 755H500M255 825H500M325 180V850M350 600V850M80 680H165M80 740H250M165 620V850M92 740V850' +
    'M518 0V1485M530 180H1500M598 195Q598 182 612 182H692Q704 182 704 195V372Q704 383 692 383H612Q598 383 598 370ZM598 272H704M530 118H622M598 0V110M660 112H1240M687 0V108M780 0V108M868 0V108M958 0V108M1060 0V108M1213 0V108' +
    'M1003 0V1485M1018 0V1485M1255 180V384H1500M1262 105H1500M1372 0V225M1258 5H1487M1485 5V382M1262 288H1487M1372 288V382M1262 205 1290 172M1315 285V242Q1315 232 1325 232H1403Q1413 232 1413 242V285M505 390H1500' +
    'M550 845V425Q550 412 564 412H980Q994 412 994 425V845M550 512H994M550 657H994M550 762H994M655 515V657M890 515V657M772 412V512M655 762V845M762 657C762 740 800 760 820 790V850M780 657C782 740 830 770 832 850M800 765Q850 835 900 838H990M555 845H655M700 850V825H740V800M1022 612H1290V390' +
    'M80 885H500M193 885V990Q190 1000 210 1020M350 870V1092M80 960H190M350 960H500M355 1028H500M280 1093H500M80 1045H175Q200 1040 212 1018L265 965M235 990 285 1040H322V1012H270V1030M170 1050Q160 1120 190 1130Q210 1120 205 1085Q185 1055 170 1050' +
    'M195 1203 250 1190H500M238 1187 305 1095M410 1100V1320M135 1165V1280M80 1135 135 1165M80 1280H290M228 1200V1320M80 1325H500M80 1365H225M140 1365V1485M228 1330V1485M298 1330V1485M370 1330V1485M80 1430H300M300 1430H370M440 1330V1485M440 1445H500' +
    'M585 870V962M687 1022V1195M540 1075H685M578 1075V1205M530 1273H748M820 868V1115M948 868V1090M822 908H945M822 1010H945M778 1162 823 1200 871 1157M823 1200V1335M945 1330V1112Q945 1100 957 1100H1485' +
    'M1035 1095V935Q1035 922 1048 922H1472Q1485 922 1485 935V1095M1142 922V1103M1258 870V1103M1372 922V1103M1042 1330V1120Q1042 1106 1055 1106H1472Q1485 1106 1485 1120V1330M1152 1106V1165Q1152 1180 1160 1190M1262 1106V1178M1375 1106V1165Q1375 1180 1363 1188M1152 1325V1265Q1152 1250 1160 1243M1262 1325V1253M1375 1325V1265Q1375 1250 1363 1243' +
    'M522 1335H1500M820 1340V1390L860 1482M820 1390H942Q955 1390 955 1402V1485M805 1485V1465L842 1450M1490 850V1485M1492 385V850',
  dashes:
    'M540 190V360M762 180V390M645 0V160M1003 0V160M1022 0V160M1253 0V160H1500M530 160H1003M542 870V1325H820M765 870V1325M545 970H765M545 1215H760M765 1125H883M883 1320V1092H1010M1007 870V1482M1022 880V1215M1490 1110V1325M855 850H1003M775 1345V1482M808 775V850M80 873H500',
};

/* [text, centre x, centre y, length, angle, minor] */
type Label = [string, number, number, number, number?, boolean?];
const LABELS: Label[] = [
  ['LA ALAMEDA', 256, -1, 104, 0, true], ['San Juan', 255, 38, 68], ['LOS LIRIOS', 233, 75, 89, 0, true], ['Santa Fe', 362, 85, 68],
  ['Florido', 363, 104, 55, 0, true], ['Rosario', 362, 123, 60], ['Entre Ríos', 356, 153, 80], ['América', 158, 78, 65, -90],
  ['Carl', 142, 14, 30, -90], ['O', 141, 123, 9, -90], ['ro Jacinto Moyano', 314, 73, 143, 90], ['Simón Bolív', 410, 46, 93, -90],
  ['Buenos Aires', 441, 108, 102, 90], ['SAN LORENZO', 545, 32, 115, 0, true], ['Concepción del Uruguay', 558, 53, 193],
  ['Santa Fe', 596, 80, 68], ['Rosario', 592, 106, 59], ['La Rioja', 517, 170, 63], ['Ceferino Namun', 554, 134, 126, 90],
  ['nzo', 652, 8, 22, 90, true], ['da Mengelle', 672, 47, 95, 90], ['CONNOR', 732, 16, 73, 0, true], ['Parque Norte', 688, 128, 96, 90, true],
  ['Avenida La Plat', 797, 40, 123, -39.5], ['10 de Mar', 845, 25, 73, -38, true], ['meralda', 922, 31, 60, 90], ['g', 1034, 1, 9, 90],
  ['Newbery', 1071, 38, 70, 92], ['España', 802, 166, 58, -90], ['Parque Norte', 910, 157, 96, 90, true], ['Don Bosco', 1027, 165, 80, 90],
  ['VILLARINO', 1123, 31, 87, 0, true], ['Homero Manzi', 1232, 43, 118], ['Antonio Turrín', 1199, 70, 116], ['Primeros Pobladores', 1124, 117, 156, 90],
  ['Avenida Nacio', 1331, 53, 111, -90], ['Homero Manzi', 1442, 42, 118], ['ANTÁRTIDA', 1442, 101, 93, 0, true], ['ARGENTINA', 1442, 125, 96, 0, true],
  ['Neuquén', 1504, 142, 73, -90], ['Antártida', 1539, 159, 72, 90, true], ['a Juan Domingo Perón', 1552, 88, 178, 90], ['Confluencia', 1569, 178, 95, 90],
  ['umbre', 1693, 23, 46, 90], ['Domingo Savio', 1782, 68, 118], ['Gustavo Eiffel', 1644, 127, 111, -90], ['Hugo Kogan', 1841, 128, 99, -90],
  ['Ladislao Biró', 1883, 133, 100, -90], ['Los Notros', 2134, 127, 85, -90], ['gas', 2005, 12, 26, 90], ['letti', 1991, 14, 29, 90, true],
  ['nos', 2073, 15, 26, 90], ['ales', 2090, 12, 27, 90, true], ['bil', 2107, 6, 19, 90], ['Saturnino Franco', 1845, 188, 137], ['Saturnino Franco', 2230, 189, 137],
  ['Arenales', 2020, 243, 70], ['El Raulí', 2131, 243, 57, 90], ['MONTE', 2213, 240, 58, 0, true], ['Parque Industrial', 1662, 283, 124, 0, true],
  ['Cipolletti', 1996, 282, 64, 0, true], ['Venezuela', 1666, 299, 80], ['Venezuela', 1840, 299, 80], ['Venezuela', 2015, 299, 80], ['Venezuela', 2202, 298, 80],
  ['Venezuela Sur', 1666, 318, 114], ['La Falda', 2070, 315, 59, 0, true], ['18 DE DICIEMBRE', 1660, 367, 147, 0, true], ['Ecuador', 1731, 421, 65],
  ['Ecuador', 2105, 421, 65], ['Perú', 1715, 441, 38], ['Lago Hess', 1657, 478, 80, -90], ['Lago Fonck', 1688, 499, 89, -90], ['Paraguay', 1735, 489, 76],
  ['Pil Pil', 2084, 506, 42, 90], ['Brasil', 1731, 536, 43], ['Brasil', 1937, 536, 43], ['Bolivia', 1671, 552, 52], ['Cuba', 1737, 576, 40], ['Cuba', 1603, 576, 40],
  ['El Salvador', 1712, 599, 88], ['LAS CALANDRIAS', 1680, 633, 137, 0, true], ['Nicaragua', 1611, 646, 82], ['Nicaragua', 1931, 641, 82],
  ['Cipolletti', 1776, 608, 64, -90, true], ['La Falda', 1810, 614, 59, -90, true], ['Lago Curruhue', 2206, 639, 120, 90], ['Lago Hess', 1665, 693, 80, 90],
  ['México', 1751, 673, 56], ['Lago Nahuel Huapi', 1710, 762, 153, 90], ['General Enrique Mosconi', 1793, 798, 198, 88.5], ['Las Calandrias', 1776, 798, 103, 89, true],
  ['Juan María Paris', 1897, 745, 131], ['CGT', 1624, 794, 30, 0, true], ['Vicente Lazzaretti', 2003, 848, 142, 88.5], ['La Falda', 1899, 805, 65, 0, true],
  ['Country', 1899, 828, 64, 0, true], ['Club', 1899, 850, 35, 0, true], ['Teniente Ibañez', 1647, 843, 119], ['ALTOS DE LA', 1678, 884, 102, 0, true],
  ['FALDA', 1678, 908, 50, 0, true], ['LA FALDA', 2203, 892, 75, 0, true], ['Maestro Don J', 2158, 951, 111], ['Los Patricios II', 2107, 1042, 104, 0, true],
  ['Plaza Pueblo', 2111, 1144, 91, 0, true], ['Lago Lácar', 1704, 1095, 86, -87], ['LOS TORDOS', 1678, 1149, 103, 0, true], ['Cipolletti', 1775, 1163, 64, 88, true],
  ['General Enrique Mosconi', 1791, 1137, 198, 89], ['RINCÓN LINDO', 1682, 1214, 124, 0, true], ['Giacinto del Ben', 1998, 1162, 131], ['La Falda', 1808, 1230, 59, 89, true],
  ['Victorica', 1606, 996, 65, -90],
];

const TOWERS = [[857, 70], [905, 62.5], [853, 105.5], [1231, 26], [1936, 118.5]];
const MUSEUMS = [[1759, 49], [1673, 209], [2205, 83]];

function MapTile({ tile, p }: { tile: Tile; p: Theme['map'] }) {
  return (
    <g transform={tile.transform}>
      {tile.areas.map(([x1, y1, x2, y2, k], i) => (
        <rect key={i} x={x1} y={y1} width={x2 - x1} height={y2 - y1} fill={p[k]} />
      ))}
      {tile.shapes?.map(([d, k], i) => <path key={i} d={d} fill={p[k]} />)}
      {tile.dotted?.map(([x1, y1, x2, y2], i) => (
        <g key={i}>
          <rect x={x1} y={y1} width={x2 - x1} height={y2 - y1} fill={p.b} />
          <path className="n dots" d={`M${x1} ${y1}H${x2}V${y2}H${x1}ZM${x1} ${y1}L${x2} ${y2}M${x2} ${y1}L${x1} ${y2}M${(x1 + x2) / 2} ${y1}V${y2}`} />
        </g>
      ))}
      <path className="n major" d={tile.majors} />
      <path className="n casing" d={tile.streets} />
      <path className="n inner" d={tile.streets} />
      {tile.dashes && <path className="n dash" d={tile.dashes} />}
    </g>
  );
}

function Cluster({ x, y, count, p }: { x: number; y: number; count: number; p: Theme['map'] }) {
  return (
    <g transform={`translate(${x} ${y})`}>
      <circle r="22.6" fill={p.pin} />
      <path d="M-8 12V6l2.500-4h11L8 6v6H5V9.500H-5V12Z" fill={p.pinCar} opacity=".6" />
      <text y="5" fontSize="16.5" style={{ fontFamily: 'Roboto, sans-serif', stroke: 'none' }} fill="#fff">{count}</text>
    </g>
  );
}

function CityMap({ palette: p }: { palette: Theme['map'] }) {
  return (
    <MapCanvas viewBox="137 0 2073 1227" preserveAspectRatio="xMinYMin slice">
      <MapTile tile={north} p={p} />
      <MapTile tile={northEast} p={p} />
      <MapTile tile={southEast} p={p} />
      <path d="M873 0 701 126 622 184" fill="none" stroke={p.major} strokeWidth="13" />
      <path d="M419 0V184" stroke={p.strong} strokeWidth="3" opacity=".7" />
      <path d="M668 94h8l1 38q6 12 6 18t-6 16l-1 20h-8l-1-20q-6-10-6-16t6-18Z" fill={p.strong} />
      <circle cx="670" cy="150" r="4" fill={p.casing} />
      <circle cx="473" cy="80" r="5.5" fill={p.w} />
      <path d="M1604 949H2107" stroke={p.major} strokeWidth="8" />
      {LABELS.map(([text, x, y, length, angle = 0, minor], i) => (
        <text
          key={i}
          transform={`translate(${x} ${y}) rotate(${angle})`}
          y="5.6"
          fontSize="16.3"
          textLength={length}
          lengthAdjust="spacingAndGlyphs"
          fill={minor ? p.minor : p.text}
        >
          {text}
        </text>
      ))}
      {TOWERS.map(([x, y], i) => (
        <path key={i} transform={`translate(${x} ${y})`} fill={p.poi} d="M-5 7V-1L0 2V-7H3V2L5 0V7Z" />
      ))}
      {MUSEUMS.map(([x, y], i) => (
        <path key={i} transform={`translate(${x} ${y})`} fill={p.poi} d="M-8 8V6H-6V0H-7V-2L-1-5V-9H4V-6H1V-5L7-2V0H6V6H8V8ZM-4 0V6H-2V0ZM-1 0V6H1V0ZM2 0V6H4V0Z" fillRule="evenodd" />
      ))}
      <path transform="translate(1665 1044)" fill={p.poi} d="M-7-1 0-5 7-1 0 3ZM-4 2 0 4.500 4 2V5L0 7-4 5Z" />
      <Cluster x={1085} y={119.5} count={3} p={p} />
      <Cluster x={1572} y={182} count={12} p={p} />
    </MapCanvas>
  );
}

export default function App() {
  return (
    <>
      <GlobalStyle />
      <Board>
        {/* Shadows sit under every window, so they only darken the backdrop. */}
        {[3, 2, 1, 0].map(step => <WindowShadow key={step} $step={step} />)}
        <ThemeProvider theme={light}>
          <Window $step={3}><Sidebar active={0} /><CityMap palette={light.map} /></Window>
        </ThemeProvider>
        <ThemeProvider theme={dark}>
          <Window $step={2}><Sidebar active={0} /><CityMap palette={dark.map} /></Window>
        </ThemeProvider>
        <ThemeProvider theme={light}>
          <Window $step={1}><Sidebar active={1} /><History placeholder={false} /></Window>
        </ThemeProvider>
        <ThemeProvider theme={dark}>
          <Window $step={0}><Sidebar active={1} /><History placeholder /></Window>
        </ThemeProvider>
      </Board>
    </>
  );
}
